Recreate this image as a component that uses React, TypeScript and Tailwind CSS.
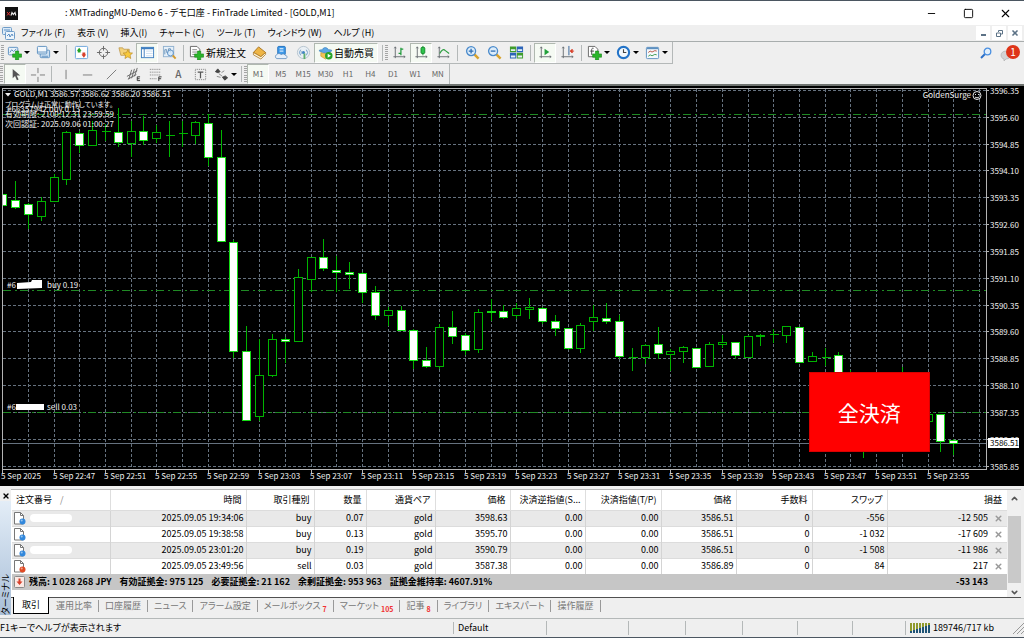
import type { ReactNode } from 'react';
import { Minus, Square, X, ChevronDown, ChevronUp } from 'lucide-react';

type Candle = [high: number, top: number, bottom: number, low: number, kind: 'up' | 'down'];

// y values in chart pixels, oldest bar first
const CANDLES: Candle[] = [
  [190, 194, 205, 209, 'down'],
  [181, 200, 207, 209, 'down'],
  [203, 204, 214, 229, 'down'],
  [197, 201, 216, 221, 'up'],
  [174, 177, 201, 202, 'up'],
  [131, 132, 179, 185, 'up'],
  [131, 133, 145, 153, 'down'],
  [121, 130, 145, 146, 'up'],
  [124, 131, 131, 141, 'up'],
  [108, 132, 142, 147, 'down'],
  [121, 131, 143, 157, 'up'],
  [116, 131, 140, 145, 'down'],
  [125, 132, 138, 143, 'up'],
  [121, 135, 135, 157, 'up'],
  [121, 133, 133, 147, 'up'],
  [121, 122, 135, 144, 'up'],
  [114, 123, 157, 166, 'down'],
  [130, 157, 241, 242, 'down'],
  [240, 242, 351, 358, 'down'],
  [326, 351, 420, 421, 'down'],
  [339, 375, 416, 421, 'up'],
  [334, 339, 375, 377, 'up'],
  [337, 339, 341, 363, 'down'],
  [269, 277, 341, 342, 'up'],
  [257, 257, 279, 292, 'up'],
  [239, 257, 268, 271, 'down'],
  [256, 270, 272, 292, 'down'],
  [262, 272, 274, 289, 'down'],
  [272, 273, 292, 303, 'down'],
  [286, 292, 315, 320, 'down'],
  [307, 310, 315, 326, 'up'],
  [306, 310, 330, 331, 'down'],
  [329, 330, 360, 369, 'down'],
  [347, 360, 366, 368, 'down'],
  [324, 327, 366, 369, 'up'],
  [311, 327, 336, 344, 'down'],
  [333, 335, 350, 355, 'down'],
  [309, 312, 349, 353, 'up'],
  [299, 311, 312, 321, 'down'],
  [305, 311, 317, 319, 'down'],
  [303, 308, 315, 319, 'up'],
  [298, 307, 309, 319, 'up'],
  [307, 308, 321, 324, 'down'],
  [315, 321, 328, 336, 'down'],
  [328, 328, 348, 350, 'down'],
  [323, 325, 348, 353, 'up'],
  [305, 317, 321, 331, 'up'],
  [303, 318, 321, 324, 'down'],
  [315, 321, 356, 359, 'down'],
  [348, 357, 357, 371, 'up'],
  [344, 345, 357, 364, 'up'],
  [327, 344, 353, 359, 'down'],
  [349, 351, 354, 371, 'up'],
  [346, 347, 351, 363, 'up'],
  [348, 348, 367, 368, 'down'],
  [342, 344, 366, 367, 'up'],
  [335, 342, 344, 348, 'up'],
  [342, 342, 355, 359, 'down'],
  [335, 336, 357, 358, 'up'],
  [334, 335, 336, 346, 'up'],
  [329, 334, 334, 343, 'up'],
  [326, 326, 335, 343, 'up'],
  [327, 327, 362, 363, 'down'],
  [352, 356, 361, 362, 'up'],
  [348, 357, 357, 366, 'up'],
  [352, 355, 400, 410, 'down'],
  [370, 400, 420, 440, 'down'],
  [400, 420, 440, 458, 'down'],
  [390, 410, 440, 446, 'up'],
  [380, 390, 410, 420, 'up'],
  [367, 380, 400, 410, 'down'],
  [390, 400, 416, 420, 'down'],
  [400, 414, 421, 430, 'up'],
  [414, 414, 441, 452, 'down'],
  [439, 440, 443, 455, 'down'],
];

const PRICES = [
  '3596.35', '3595.60', '3594.85', '3594.10', '3593.35', '3592.60', '3591.85', '3591.10',
  '3590.35', '3589.60', '3588.85', '3588.10', '3587.35', '3586.60', '3585.85',
];

const TIMES = [
  '5 Sep 2025', '5 Sep 22:47', '5 Sep 22:51', '5 Sep 22:55', '5 Sep 22:59', '5 Sep 23:03',
  '5 Sep 23:07', '5 Sep 23:11', '5 Sep 23:15', '5 Sep 23:19', '5 Sep 23:23', '5 Sep 23:27',
  '5 Sep 23:31', '5 Sep 23:35', '5 Sep 23:39', '5 Sep 23:43', '5 Sep 23:47', '5 Sep 23:51',
  '5 Sep 23:55',
];

const MENUS = ['ファイル (F)', '表示 (V)', '挿入(I)', 'チャート (C)', 'ツール (T)', 'ウィンドウ (W)', 'ヘルプ (H)'];
const PERIODS = ['M1', 'M5', 'M15', 'M30', 'H1', 'H4', 'D1', 'W1', 'MN'];

const HEADERS = ['時間', '取引種別', '数量', '通貨ペア', '価格', '決済逆指値(S...', '決済指値(T/P)', '価格', '手数料', 'スワップ'];

const ORDERS = [
  { type: 'buy', hidden: true, cells: ['2025.09.05 19:34:06', 'buy', '0.07', 'gold', '3598.63', '0.00', '0.00', '3586.51', '0', '-556'], profit: '-12 505' },
  { type: 'buy', hidden: false, cells: ['2025.09.05 19:38:58', 'buy', '0.13', 'gold', '3595.70', '0.00', '0.00', '3586.51', '0', '-1 032'], profit: '-17 609' },
  { type: 'buy', hidden: true, cells: ['2025.09.05 23:01:20', 'buy', '0.19', 'gold', '3590.79', '0.00', '0.00', '3586.51', '0', '-1 508'], profit: '-11 986' },
  { type: 'sell', hidden: false, cells: ['2025.09.05 23:49:56', 'sell', '0.03', 'gold', '3587.38', '0.00', '0.00', '3586.89', '0', '84'], profit: '217' },
];

const TABS: { label: string; count?: string }[] = [
  { label: '運用比率' },
  { label: '口座履歴' },
  { label: 'ニュース' },
  { label: 'アラーム設定' },
  { label: 'メールボックス', count: '7' },
  { label: 'マーケット', count: '105' },
  { label: '記事', count: '8' },
  { label: 'ライブラリ' },
  { label: 'エキスパート' },
  { label: '操作履歴' },
];

export default function App() {
  return (
    <div className="flex min-h-screen flex-col border-y border-[#4b5661] bg-[#efefef] font-['Noto_Sans_CJK_JP',sans-serif] text-[9px] leading-3 text-black [font-feature-settings:'palt']">
      <TitleBar />
      <MenuBar />
      <div className="flex flex-col border-t border-[#a8adad]">
        <MainToolbar />
        <LineToolbar />
      </div>
      <Chart />
      <Terminal />
      <StatusBar />
    </div>
  );
}

function TitleBar() {
  return (
    <header className="flex h-6 items-center bg-white pl-[5px]">
      <svg width="13" height="13" viewBox="0 0 13 13" aria-hidden="true">
        <rect width="13" height="13" fill="#111" />
        <path d="M2 5l3 3.500M5 5L2 8.500" stroke="#d33" strokeWidth="1" />
        <path d="M6 8.500l1-3 1.300 2 1.700-2 .8 3" stroke="#eee" strokeWidth="1.100" fill="none" />
      </svg>
      <h1 className="ml-[47px] flex-1">: XMTradingMU-Demo 6 - デモ口座 - FinTrade Limited - [GOLD,M1]</h1>
      <button aria-label="Minimize" className="flex w-[37px] justify-center"><Minus size={11} strokeWidth={2} /></button>
      <button aria-label="Maximize" className="flex w-[37px] justify-center"><Square size={11} strokeWidth={2} /></button>
      <button aria-label="Close" className="flex w-[37px] justify-center"><X size={13} strokeWidth={2} /></button>
    </header>
  );
}

function MenuBar() {
  return (
    <nav className="flex h-4 items-center pl-0.5">
      <svg width="13" height="13" viewBox="0 0 13 13" aria-hidden="true">
        <rect x="0.500" y="0.500" width="9" height="7" rx="1" fill="#dcebf8" stroke="#6f9cc8" />
        <rect x="3.500" y="4.500" width="9" height="8" rx="1" fill="#eef5fb" stroke="#6f9cc8" />
        <path d="M2 3h6M5 9l2-2 1 3 2-3 1 2" stroke="#5b8fc4" fill="none" />
      </svg>
      <ul className="ml-1.5 flex flex-1 gap-3">
        {MENUS.map((m) => (
          <li key={m}><button className="whitespace-nowrap">{m}</button></li>
        ))}
      </ul>
      <div className="flex gap-0.5 pr-0.5 text-[#5c7286]">
        <button aria-label="Minimize chart" className="flex h-3.5 w-3.5 items-end justify-center bg-white pb-1">
          <span className="h-0.5 w-[5px] bg-[#5c7286]" />
        </button>
        <button aria-label="Restore chart" className="flex h-3.5 w-3.5 items-center justify-center bg-white">
          <svg width="7" height="7" viewBox="0 0 7 7" fill="none" stroke="currentColor">
            <path d="M2.500 2V.5h4v3.500H5M.5 3h4v3.500h-4z" />
          </svg>
        </button>
        <button aria-label="Close chart" className="flex h-3.5 w-3.5 items-center justify-center bg-white">
          <X size={8} strokeWidth={5} />
        </button>
      </div>
    </nav>
  );
}

function Grip() {
  return (
    <span className="flex h-4 w-1 shrink-0 flex-col justify-between">
      {[0, 1, 2, 3, 4, 5, 6, 7].map((i) => (
        <span key={i} className="h-px w-[3px] bg-[#a5a5a5]" />
      ))}
    </span>
  );
}

function Divider() {
  return <span className="mx-[3px] h-4 w-px shrink-0 bg-[#b4b8b8]" />;
}

function Caret() {
  return <span className="h-0 w-0 border-x-[3px] border-t-[3px] border-x-transparent border-t-black" />;
}

function Tool({ label, pressed, children }: { label: string; pressed?: boolean; children: ReactNode }) {
  return (
    <button
      aria-label={label}
      aria-pressed={pressed}
      className={
        pressed
          ? 'flex h-5 w-[22px] shrink-0 items-center justify-center border border-[#b0b8b0] border-r-white border-b-white bg-[#f5faf3]'
          : 'flex h-5 w-[22px] shrink-0 items-center justify-center'
      }
    >
      {children}
    </button>
  );
}

function DropTool({ label, children }: { label: string; children: ReactNode }) {
  return (
    <button aria-label={label} className="flex h-5 w-[29px] shrink-0 items-center gap-0.5 pl-0.5">
      {children}
      <Caret />
    </button>
  );
}

function Icon({ children }: { children: ReactNode }) {
  return (
    <svg width="15" height="15" viewBox="0 0 16 16" fill="none" className="shrink-0" aria-hidden="true">
      {children}
    </svg>
  );
}

function Plus() {
  return <path d="M9 6.500h3.500v3H15.500v3.500h-3V16H9v-3H6V9.500h3z" fill="#2bb52b" stroke="#128012" strokeWidth=".6" />;
}

// the two axes shared by the chart type buttons
function Axes() {
  return <path d="M3.500 2v12M1.500 12.500h12.500M2.500 3.500l1-1.500 1 1.500M12.500 11.500l1.500 1-1.500 1" stroke="#6a6f73" />;
}

function MainToolbar() {
  return (
    <div className="flex h-[22px] items-center pr-1">
      <div className="flex h-full items-center border-r border-b border-[#b4b8b8] pl-px">
        <Grip />
        <DropTool label="新規チャート">
          <Icon>
            <rect x="1.500" y="2.500" width="10" height="8" rx="1" fill="#e8f2fb" stroke="#5d90c0" />
            <path d="M3 8l2-3 2 2 3-3" stroke="#5d90c0" />
            <Plus />
          </Icon>
        </DropTool>
        <DropTool label="プロファイル">
          <Icon>
            <rect x="4.500" y="5.500" width="10" height="8" rx="1" fill="#cfe2f3" stroke="#5d90c0" />
            <rect x="1.500" y="1.500" width="10" height="8" rx="1" fill="#f2f8fd" stroke="#5d90c0" />
            <path d="M1.500 7.500h10M6 12h7" stroke="#5d90c0" />
          </Icon>
        </DropTool>
        <Divider />
        <Tool label="気配値表示">
          <Icon>
            <rect x="1.500" y="1.500" width="13" height="13" rx="1" fill="#fff" stroke="#6aa4dc" />
            <path d="M3 6l2.500-3L8 6zM4 6h3v2H4z" fill="#25a325" />
            <path d="M8 10l2.500 3.500L13 10zM9 8h3v2H9z" fill="#d8402b" />
          </Icon>
        </Tool>
        <Tool label="データウィンドウ">
          <Icon>
            <circle cx="8" cy="8" r="4.500" stroke="#666" />
            <path d="M8 1v5M8 10v5M1 8h5M10 8h5" stroke="#666" />
          </Icon>
        </Tool>
        <Tool label="ナビゲーター">
          <Icon>
            <path d="M1 3h4l1 1.500h6V11H3z" fill="#f4d27a" stroke="#b9944a" strokeWidth=".8" />
            <path d="M10.500 5l1.500 3.200 3.500.4-2.600 2.300.7 3.500-3.100-1.800-3.100 1.800.7-3.500L5.500 8.600 9 8.200z" fill="#f8c93c" stroke="#b98a20" strokeWidth=".7" />
          </Icon>
        </Tool>
        <Tool label="ターミナル" pressed>
          <Icon>
            <rect x="1.500" y="2.500" width="13" height="11" fill="#fff" stroke="#3f7fc0" />
            <path d="M1.500 3.500h13" stroke="#3f7fc0" strokeWidth="2" />
            <path d="M4.500 4v9" stroke="#3f7fc0" />
            <path d="M6.500 6.500h7M6.500 9h7M6.500 11.500h7" stroke="#c8ddf0" />
          </Icon>
        </Tool>
        <Tool label="ストラテジーテスター">
          <Icon>
            <rect x="1.500" y="1.500" width="11" height="11" fill="#e6f0f9" stroke="#8fb0cf" />
            <path d="M3 10V5h2v3h2V4h2v4" stroke="#6c94ba" />
            <circle cx="9" cy="8.500" r="3.200" fill="#d4e8fa" fillOpacity=".8" stroke="#5b8fc4" />
            <path d="M11.500 11l3 3.500" stroke="#d59a2a" strokeWidth="2" />
          </Icon>
        </Tool>
        <Divider />
        <button className="flex h-5 shrink-0 items-center gap-0.5 px-0.5 text-[10px] whitespace-nowrap">
          <Icon>
            <path d="M1.500 1.500h7l3 3v8h-10z" fill="#fff" stroke="#666" />
            <path d="M3.500 5h5M3.500 7.500h5M3.500 10h3" stroke="#888" />
            <Plus />
          </Icon>
          新規注文
        </button>
        <Tool label="メタエディター">
          <Icon>
            <path d="M1.500 8L7 2l7.500 6-5 4.500z" fill="#eeb545" stroke="#a87420" />
            <path d="M1.500 8v2.500l8 4.500 5-5V8l-5 4.500z" fill="#fdf3d6" stroke="#a87420" strokeWidth=".8" />
          </Icon>
        </Tool>
        <Tool label="VPS">
          <Icon>
            <rect x="4" y="1.500" width="8" height="9" rx="1" fill="#3f9aea" stroke="#1f6fbd" />
            <path d="M6 4h4M6 6.500h4" stroke="#fff" />
            <path d="M3 14.500a2.300 2.300 0 010-4.300c1-1.500 3.500-1.500 4.500 0 2-1.300 4-.5 4.500.8 2 0 2.500 2.500 1 3.500z" fill="#e6effa" stroke="#5486b8" strokeWidth=".8" />
          </Icon>
        </Tool>
        <Tool label="シグナル">
          <Icon>
            <circle cx="8" cy="8" r="6.500" fill="#eaf0f5" stroke="#b4c2ce" />
            <path d="M5 11a4.500 4.500 0 010-6M11 5a4.500 4.500 0 010 6M6.500 9.500a2 2 0 010-3" stroke="#6f9cc4" />
            <circle cx="8" cy="8" r="1.600" fill="#3f83c4" />
            <path d="M9 9v6" stroke="#5fae6f" strokeWidth="2" />
          </Icon>
        </Tool>
        <button aria-pressed="true" className="flex h-5 shrink-0 items-center gap-px border border-[#b0b8b0] border-r-white border-b-white bg-[#f5faf3] px-[3px] text-[10px] whitespace-nowrap">
          <Icon>
            <path d="M1 6c1-1 3-1 4-1 0-3 5-3 6 0 1 0 3 0 4 1-4 3-10 3-14 0z" fill="#5aa7e6" stroke="#2d74b4" strokeWidth=".6" />
            <path d="M3 8c2 1.500 7 1.500 9 0v4l-4 3-5-3z" fill="#f2c455" stroke="#b98a20" strokeWidth=".6" />
            <circle cx="11.500" cy="11.500" r="4" fill="#28a428" />
            <path d="M10.300 9.300l3.500 2.200-3.500 2.200z" fill="#fff" />
          </Icon>
          自動売買
        </button>
        <span className="ml-1 flex w-[6px] border-l border-[#b4b8b8] pl-0.5"><Grip /></span>
        <Tool label="バーチャート">
          <Icon><Axes /><path d="M9.500 3v8M7 9h2.500M9.500 4.500H12" stroke="#1f9a3a" strokeWidth="1.300" /></Icon>
        </Tool>
        <Tool label="ローソク足" pressed>
          <Icon>
            <Axes />
            <path d="M9.500 1v10" stroke="#128a2a" />
            <rect x="7.500" y="2.500" width="4" height="6.500" rx="1" fill="#2cc44a" stroke="#128a2a" />
          </Icon>
        </Tool>
        <Tool label="ラインチャート">
          <Icon><Axes /><path d="M4 9c2-4 4-5 6-3l4 3" stroke="#2a9d3e" strokeWidth="1.200" /></Icon>
        </Tool>
        <Divider />
        <Tool label="拡大">
          <Icon>
            <path d="M9.500 9.500l5 5" stroke="#d8a22c" strokeWidth="2.600" />
            <circle cx="6.500" cy="6.500" r="4.800" fill="#dcecfa" stroke="#4a8acb" strokeWidth="1.400" />
            <path d="M6.500 4v5M4 6.500h5" stroke="#2f6fb4" strokeWidth="1.400" />
          </Icon>
        </Tool>
        <Tool label="縮小">
          <Icon>
            <path d="M9.500 9.500l5 5" stroke="#d8a22c" strokeWidth="2.600" />
            <circle cx="6.500" cy="6.500" r="4.800" fill="#dcecfa" stroke="#4a8acb" strokeWidth="1.400" />
            <path d="M4 6.500h5" stroke="#2f6fb4" strokeWidth="1.400" />
          </Icon>
        </Tool>
        <Tool label="整列">
          <Icon>
            <path d="M1 1.500h6.700v6.200H1zM8.300 8.300H15v6.200H8.300z" fill="#3f9c2c" />
            <path d="M8.300 1.500H15v6.200H8.300zM1 8.300h6.700v6.200H1z" fill="#2c64b8" />
            <path d="M2 4.500h4.700v2H2zM9.300 4.500H14v2H9.300zM2 11.300h4.700v2H2zM9.300 11.300H14v2H9.300z" fill="#e8f2f8" />
          </Icon>
        </Tool>
        <Divider />
        <Tool label="自動スクロール" pressed>
          <Icon><Axes /><path d="M7 4l5 3.500L7 11z" fill="#22a03a" /></Icon>
        </Tool>
        <Tool label="チャートシフト">
          <Icon>
            <Axes />
            <path d="M9.500 1v10" stroke="#2d5f96" />
            <path d="M15 6.500h-4M13 4.500l-2 2 2 2z" fill="#d8402b" stroke="#d8402b" />
          </Icon>
        </Tool>
        <Divider />
        <DropTool label="インディケータ">
          <Icon>
            <path d="M1.500 1.500h7l3 3v8h-10z" fill="#fff" stroke="#666" />
            <path d="M7 3.500c-2-.5-2 1-2 2v5M3.500 6.500h4" stroke="#444" />
            <Plus />
          </Icon>
        </DropTool>
        <DropTool label="時間足設定">
          <Icon>
            <circle cx="8" cy="8" r="6" fill="#f2f8fd" stroke="#2273c8" strokeWidth="2.200" />
            <path d="M8 4.500V8h3" stroke="#444" strokeWidth="1.200" />
          </Icon>
        </DropTool>
        <DropTool label="テンプレート">
          <Icon>
            <rect x="1.500" y="2.500" width="13" height="12" rx="1" fill="#f4f9fd" stroke="#5d90c0" />
            <path d="M2 3.500h12" stroke="#5d90c0" strokeWidth="2" />
            <path d="M3.500 8l2-1.500 2 1 3-1.500 2 .5" stroke="#b8503c" />
            <path d="M3.500 12l2-1.500 2 1 3-1.500 2 .5" stroke="#3c9a50" />
          </Icon>
        </DropTool>
      </div>
      <div className="ml-auto flex items-center gap-2">
        <button aria-label="検索">
          <svg width="12" height="12" viewBox="0 0 12 12" fill="none">
            <path d="M1 11l4-4" stroke="#2b6fc8" strokeWidth="2" />
            <circle cx="7.500" cy="4.500" r="3.300" fill="#e2effb" stroke="#4a8fe0" strokeWidth="1.300" />
          </svg>
        </button>
        <button aria-label="通知" className="relative h-5 w-5">
          <svg width="14" height="12" viewBox="0 0 14 12" className="mt-1.5" fill="#d4d4d4" stroke="#aaa" strokeWidth=".6">
            <path d="M6 1c3 0 5 2 5 4s-2 4-5 4l-2 2V9C2 8.500 1 7 1 5s2-4 5-4z" />
          </svg>
          <span className="absolute top-0.5 right-0 h-3.5 w-3.5 rounded-full bg-[#de3418] text-center text-[10px] leading-3.5 text-white">1</span>
        </button>
      </div>
    </div>
  );
}

function LineToolbar() {
  return (
    <div className="flex h-[22px] items-center border-b-2 border-[#6f7370] text-[#666]">
      <Grip />
      <Tool label="カーソル" pressed>
        <Icon><path d="M5 2v10l2.500-2.500L9.500 14l1.800-.8-2-4.200H13z" fill="#555" /></Icon>
      </Tool>
      <Tool label="十字カーソル">
        <Icon><path d="M8.500 1v5.500M8.500 10.500V16M1 8.500h5.500M10.500 8.500H16" stroke="#777" /></Icon>
      </Tool>
      <Divider />
      <div className="grid w-[157px] grid-cols-7 justify-items-center">
        <Tool label="垂直線"><Icon><path d="M7.500 3v10" stroke="#777" /></Icon></Tool>
        <Tool label="水平線"><Icon><path d="M2 8.500h10" stroke="#777" /></Icon></Tool>
        <Tool label="トレンドライン"><Icon><path d="M3 13L13 3" stroke="#777" /></Icon></Tool>
        <Tool label="平行チャネル">
          <Icon>
            <path d="M1 10l11-6M2 13l9-5M3 13L6 3M6 12l3-10M9 10l3-9" stroke="#666" />
            <path d="M15 10.500h-3v4h3M12 12.500h2.500" stroke="#333" />
          </Icon>
        </Tool>
        <Tool label="フィボナッチ">
          <Icon>
            <path d="M2 2.500h12M2 5.500h12M2 8.500h12M2 12.500h7" stroke="#777" strokeDasharray="1 1" />
            <path d="M14.500 10.500h-3V15M11.500 12.500h2.500" stroke="#333" />
          </Icon>
        </Tool>
        <Tool label="テキスト"><span className="text-[10px] font-medium">A</span></Tool>
        <Tool label="ラベル">
          <Icon>
            <rect x="2.500" y="2.500" width="11" height="11" stroke="#777" strokeDasharray="1 1" />
            <path d="M5 5.500h6M8 5.500V12" stroke="#555" strokeWidth="1.300" />
          </Icon>
        </Tool>
      </div>
      <DropTool label="矢印">
        <Icon>
          <path d="M1.500 5L4 2l2.500 3L4 6zM9 11l3-1.500 2.500 2-3 2.500z" fill="#444" stroke="#444" />
          <path d="M5 7l4 3M8 6l3-2M3 10l4 1" stroke="#888" />
        </Icon>
      </DropTool>
      <span className="flex w-[6px] border-l border-[#b4b8b8] pl-0.5"><Grip /></span>
      <div className="grid h-5 w-[202px] grid-cols-9 text-[8px]">
        {PERIODS.map((p) => (
          <button
            key={p}
            aria-pressed={p === 'M1'}
            className={p === 'M1' ? 'border border-[#b0b8b0] border-r-white border-b-white bg-[#f5faf3]' : ''}
          >
            {p}
          </button>
        ))}
      </div>
      <span className="h-full w-px bg-[#b4b8b8]" />
    </div>
  );
}

function Chart() {
  const barX = (i: number) => Math.floor(2.6 + i * 12.853);
  const gridY = (i: number) => Math.round(91 + i * 26.83) - 0.5;

  return (
    <main className="relative bg-black">
      <svg viewBox="0 86 1024 400" className="block w-full" fontSize="8" role="img" aria-label="GOLD,M1">
        {/* Grid */}
        <g stroke="#66727f" strokeDasharray="3 2" shapeRendering="crispEdges">
          {PRICES.map((p, i) => (
            <line key={p} x1="3" x2="986" y1={gridY(i)} y2={gridY(i)} />
          ))}
          {Array.from({ length: 38 }, (_, i) => (
            <line key={i} x1={barX(2 + i * 2) + 0.5} x2={barX(2 + i * 2) + 0.5} y1="89" y2="469" />
          ))}
        </g>

        {/* Order levels */}
        <g stroke="#1f8a24" strokeDasharray="8 4 2 3" shapeRendering="crispEdges">
          <line x1="3" x2="986" y1="114.500" y2="114.500" />
          <line x1="3" x2="986" y1="290.500" y2="290.500" />
          <line x1="3" x2="986" y1="412.500" y2="412.500" />
        </g>
        <line x1="3" x2="986" y1="443.500" y2="443.500" stroke="#66727f" shapeRendering="crispEdges" />

        {/* Candles */}
        <g stroke="#00b400" shapeRendering="crispEdges">
          {CANDLES.map(([high, top, bottom, low, kind], i) => {
            const x = barX(i) + 0.5;
            const left = Math.max(x - 4, 2.5);
            return (
              <g key={i}>
                <line x1={x} x2={x} y1={high} y2={low} />
                {top === bottom ? (
                  <line x1={left} x2={x + 5} y1={top + 0.5} y2={top + 0.5} />
                ) : (
                  <rect
                    x={left}
                    y={top + 0.5}
                    width={x + 4 - left}
                    height={bottom - top}
                    fill={kind === 'down' ? '#fff' : '#000'}
                    stroke={kind === 'down' ? '#14dc14' : '#00b400'}
                  />
                )}
              </g>
            );
          })}
        </g>

        {/* Frame and ticks */}
        <g stroke="#b4b4b4" shapeRendering="crispEdges">
          <path d="M2.500 469.500V88.500H986.500V469.500Z" fill="none" />
          {PRICES.map((p, i) => (
            <line key={p} x1="987" x2="989" y1={gridY(i)} y2={gridY(i)} />
          ))}
          {TIMES.map((t, i) => (
            <line key={t} x1={barX(i * 4) + 0.5} x2={barX(i * 4) + 0.5} y1="470" y2="473" />
          ))}
        </g>

        {/* Labels */}
        <g fill="#f0f0f0">
          {PRICES.map((p, i) => (
            <text key={p} x="990" y={gridY(i) + 3}>{p}</text>
          ))}
          {TIMES.map((t, i) => (
            <text key={t} x={barX(i * 4) - 1} y="479">{t}</text>
          ))}
          <path d="M5 93h6l-3 3.500z" />
          <text x="14" y="97">GOLD,M1</text>
          <text x="50" y="97">3586.57 3586.62 3586.20 3586.51</text>
          <text x="5" y="107" fontSize="7">プログラムは正常に動作しています。</text>
          <text x="7" y="112">#66357942 buy 0.13</text>
          <text x="5" y="117">有効期限: 2100.12.31 23:59:59</text>
          <text x="5" y="127">次回認証: 2025.09.06 01:00:27</text>
          <text x="7" y="288">#6</text>
          <text x="47" y="288">buy 0.19</text>
          <text x="7" y="410">#6</text>
          <text x="47" y="410">sell 0.03</text>
          <text x="971" y="98" textAnchor="end">GoldenSurge</text>
        </g>
        <path d="M17 283l14-1 1-2h10v8l-25 1z" fill="#fff" />
        <path d="M16 404h28v6H16z" fill="#fff" />
        <g fill="none" stroke="#e6e6e6">
          <circle cx="977" cy="95.500" r="4" />
          <path d="M975 94.500h1M978 94.500h1M975 97c1 1 3 1 4 0" />
        </g>
        <rect x="988" y="438" width="31" height="10" fill="#fff" />
        <text x="990" y="446" fill="#000">3586.51</text>
      </svg>
      <button className="absolute top-[71.5%] left-[79%] h-[20%] w-[11.8%] border border-[#d80000] bg-[#ff0000] text-[21px] text-white">
        全決済
      </button>
    </main>
  );
}

function OrderIcon({ type }: { type: string }) {
  return (
    <svg width="12" height="13" viewBox="0 0 12 13" aria-label={type}>
      <path d="M.5.500h6l3 3v8.500h-9z" fill="#fff" stroke="#777" />
      <path d="M6.500.500v3h3" fill="none" stroke="#777" />
      <circle cx="8.500" cy="9.500" r="3" fill={type === 'buy' ? '#3288dc' : '#e04a24'} />
      <circle cx="7.700" cy="8.500" r="1" fill="#fff" fillOpacity=".5" />
    </svg>
  );
}

function Terminal() {
  return (
    <section className="flex pt-[3px]">
      {/* Side caption */}
      <div className="flex w-[11px] shrink-0 flex-col items-center pb-[3px]">
        <button aria-label="ターミナルを閉じる" className="h-3 pt-0.5"><X size={8} strokeWidth={4} /></button>
        <div className="w-full flex-1 rotate-180 bg-linear-to-t from-[#e3edf7] to-[#a9bfd8] leading-[11px] whitespace-nowrap [text-orientation:sideways] [writing-mode:vertical-rl]">
          ターミナル
        </div>
      </div>

      <div className="min-w-0 flex-1">
        <div className="mr-[3px] flex border-t border-b border-t-[#b8b8b8] border-b-[#505050] bg-white pb-[7px] pl-px">
          <table className="w-full table-fixed border-collapse text-right whitespace-nowrap">
            <colgroup>
              <col className="w-[98px]" />
              <col className="w-[136px]" />
              <col className="w-[68px]" />
              <col className="w-[52px]" />
              <col className="w-[69px]" />
              <col className="w-[75px]" />
              <col className="w-[75px]" />
              <col className="w-[76px]" />
              <col className="w-[75px]" />
              <col className="w-[76px]" />
              <col className="w-[75px]" />
              <col />
            </colgroup>
            <thead>
              <tr className="h-5">
                <th className="border-r border-[#dedede] pl-1 text-left font-normal">
                  注文番号 <span className="ml-1.5 text-[#888]">/</span>
                </th>
                {HEADERS.map((h, i) => (
                  <th key={i} className="border-r border-[#dedede] pr-1 font-normal">{h}</th>
                ))}
                <th className="pr-[5px] font-normal">損益</th>
              </tr>
            </thead>
            <tbody>
              {ORDERS.map((o) => (
                <tr key={o.cells[0]} className="h-4 border-t border-[#dcdcdc] odd:bg-[#e9e9e9]">
                  <td className="border-r border-[#d4d4d4] py-0 pl-0.5">
                    <div className="flex items-center gap-1">
                      <OrderIcon type={o.type} />
                      {o.hidden && <span className="h-2 w-[42px] rounded-sm bg-white" />}
                    </div>
                  </td>
                  {o.cells.map((c, i) => (
                    <td key={i} className="border-r border-[#d4d4d4] py-0 pr-0.5">{c}</td>
                  ))}
                  <td className="py-0 pr-1">
                    <div className="flex items-center justify-end gap-1.5">
                      {o.profit}
                      <button aria-label="決済" className="text-[#999]"><X size={9} strokeWidth={4} /></button>
                    </div>
                  </td>
                </tr>
              ))}
            </tbody>
            <tfoot>
              <tr className="h-4 bg-[#c6c6c6] font-semibold">
                <td colSpan={11} className="py-0 pl-0.5">
                  <div className="flex items-center gap-1">
                    <svg width="11" height="12" viewBox="0 0 11 12" aria-hidden="true">
                      <rect x=".5" y=".5" width="10" height="11" rx="1" fill="#fbe9e4" stroke="#8a8a8a" />
                      <path d="M4.500 2.500h2v3h2L5.500 9l-3-3.500h2z" fill="#d8402b" />
                    </svg>
                    <span className="flex gap-2">
                      <span>残高: 1 028 268 JPY</span>
                      <span>有効証拠金: 975 125</span>
                      <span>必要証拠金: 21 162</span>
                      <span>余剰証拠金: 953 963</span>
                      <span>証拠金維持率: 4607.91%</span>
                    </span>
                  </div>
                </td>
                <td className="py-0 pr-[19px]">-53 143</td>
              </tr>
            </tfoot>
          </table>
          {/* Scroll bar */}
          <div className="-mb-[7px] flex w-[14px] shrink-0 flex-col items-center justify-between bg-[#f0f0f0] text-[#555]">
            <button aria-label="上へ" className="pt-1"><ChevronUp size={9} strokeWidth={4} /></button>
            <span className="mt-2 h-[67px] w-[13px] bg-[#c9c9c9]" />
            <button aria-label="下へ"><ChevronDown size={9} strokeWidth={4} /></button>
          </div>
        </div>

        {/* Tabs */}
        <div role="tablist" className="-mt-px flex h-[21px] items-start pl-0.5 text-[#777]">
          <button role="tab" aria-selected="true" className="h-[17px] border border-t-0 border-black bg-white px-2 text-black">
            取引
          </button>
          <div className="flex items-center pt-px pl-px">
            {TABS.map((t) => (
              <button key={t.label} role="tab" aria-selected="false" className="my-0.5 flex h-3 items-center border-r border-[#999] px-1.5 whitespace-nowrap">
                {t.label}
                {t.count && <span className="mt-1.5 ml-0.5 text-[7px] font-semibold text-[#f03030]">{t.count}</span>}
              </button>
            ))}
          </div>
        </div>
      </div>
    </section>
  );
}

function StatusBar() {
  return (
    <footer className="flex h-[19px] items-center border-t border-[#b4b8b8]">
      <p className="flex-1 whitespace-nowrap">F1キーでヘルプが表示されます</p>
      <p className="w-[93px] border-l border-[#b4b8b8] pl-1">Default</p>
      <span className="h-3.5 w-[82px] border-l border-[#b4b8b8]" />
      <span className="h-3.5 w-[57px] border-l border-[#b4b8b8]" />
      <span className="h-3.5 w-[57px] border-l border-[#b4b8b8]" />
      <span className="h-3.5 w-[55px] border-l border-[#b4b8b8]" />
      <span className="h-3.5 w-[55px] border-l border-[#b4b8b8]" />
      <span className="h-3.5 w-[53px] border-l border-[#b4b8b8]" />
      <div className="flex h-3.5 w-[119px] items-center gap-[3px] border-l border-[#b4b8b8] pl-1">
        <svg width="20" height="12" viewBox="0 0 20 12" aria-hidden="true">
          {[0, 1, 2, 3, 4, 5, 6].map((i) => (
            <g key={i}>
              <rect x={i * 3} y="1" width="2" height={8 - i} fill="#8f9a2c" />
              <rect x={i * 3} y={9 - i} width="2" height={2 + i} fill="#1f5476" />
            </g>
          ))}
        </svg>
        <span className="flex-1 whitespace-nowrap">189746/717 kb</span>
        <svg width="12" height="12" viewBox="0 0 12 12" stroke="#999" aria-hidden="true">
          <path d="M1 12L12 1M5 12l7-7M9 12l3-3" />
        </svg>
      </div>
    </footer>
  );
}
